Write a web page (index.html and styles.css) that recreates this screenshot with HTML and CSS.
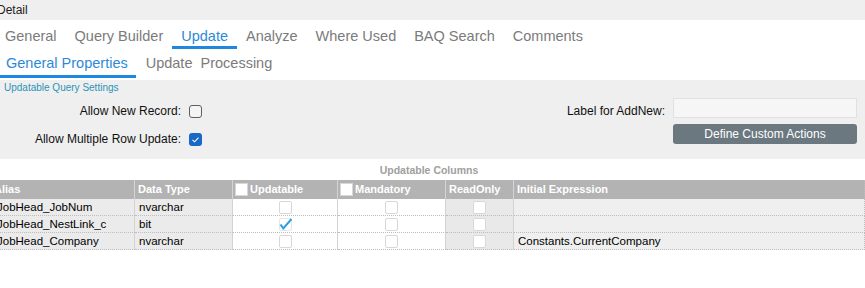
FILE: index.html
```html
<!DOCTYPE html>
<html lang="en">
<head>
    <meta charset="UTF-8">
    <title>Update - Detail</title>
    <link rel="stylesheet" href="styles.css">
</head>
<body>
    <div class="topbar">Detail</div>

    <nav class="tabs">
        <span class="tab">General</span>
        <span class="tab">Query Builder</span>
        <span class="tab active">Update</span>
        <span class="tab">Analyze</span>
        <span class="tab">Where Used</span>
        <span class="tab">BAQ Search</span>
        <span class="tab">Comments</span>
    </nav>

    <nav class="subtabs">
        <span class="subtab active">General Properties</span>
        <span class="subtab">Update  Processing</span>
    </nav>

    <section class="settings">
        <div class="settings-title">Updatable Query Settings</div>
        <div class="settings-grid">
            <label class="lbl" for="allowNew">Allow New Record:</label>
            <span class="check" id="allowNew"></span>
            <span></span>
            <label class="lbl" for="addNewLabel">Label for AddNew:</label>
            <input type="text" class="field" id="addNewLabel">

            <label class="lbl" for="allowMulti">Allow Multiple Row Update:</label>
            <span class="check checked" id="allowMulti">
                <svg width="13" height="13" viewBox="0 0 13 13"><polyline points="3.5,6.8 5.6,8.8 9.5,4.6" fill="none" stroke="#fff" stroke-width="1.1"/></svg>
            </span>
            <span></span>
            <span></span>
            <button type="button" class="action-btn">Define Custom Actions</button>
        </div>
    </section>

    <div class="columns-panel">
        <div class="caption">Updatable Columns</div>
        <div class="grid">
            <div class="head first">Alias</div>
            <div class="head">Data Type</div>
            <div class="head"><span class="hbox"></span>Updatable</div>
            <div class="head"><span class="hbox"></span>Mandatory</div>
            <div class="head">ReadOnly</div>
            <div class="head last">Initial Expression</div>

            <div class="c-grey">JobHead_JobNum</div>
            <div class="c-grey">nvarchar</div>
            <div class="c-check"><span class="box"></span></div>
            <div class="c-check"><span class="box"></span></div>
            <div class="c-check c-ro"><span class="box"></span></div>
            <div class="c-expr last"></div>

            <div class="c-grey">JobHead_NestLink_c</div>
            <div class="c-grey">bit</div>
            <div class="c-check"><span class="box on"><svg width="13" height="13" viewBox="0 0 13 13"><polyline points="1.5,6.5 4.3,10.3 12.5,1" fill="none" stroke="#27a0e6" stroke-width="2"/></svg></span></div>
            <div class="c-check"><span class="box"></span></div>
            <div class="c-check c-ro"><span class="box"></span></div>
            <div class="c-expr last"></div>

            <div class="c-grey">JobHead_Company</div>
            <div class="c-grey">nvarchar</div>
            <div class="c-check"><span class="box"></span></div>
            <div class="c-check"><span class="box"></span></div>
            <div class="c-check c-ro"><span class="box"></span></div>
            <div class="c-expr last">Constants.CurrentCompany</div>
        </div>
    </div>
</body>
</html>
```

FILE: styles.css
```css
body {
    margin: 0;
    width: 865px;
    overflow: hidden;
    font-family: "Liberation Sans", Arial, sans-serif;
    background-color: #fff;
    color: #000;
}

.topbar {
    height: 20px;
    line-height: 20px;
    font-size: 12px;
    text-indent: -3px;
    color: #222;
    background-color: #efefef;
}

/* main tab strip */
.tabs {
    display: flex;
    margin-left: -4px;
}

.tab {
    padding: 8px 9px 1px;
    line-height: 17px;
    font-size: 14.5px;
    color: #7b7b7b;
    border-bottom: 3px solid transparent;
}

.tab.active {
    color: #2b8ad6;
    border-bottom-color: #1d88dd;
}

.subtabs {
    display: flex;
    gap: 4px;
    margin-bottom: 2px;
}

.subtab {
    padding: 6px 8px 3px 6px;
    line-height: 17px;
    font-size: 14.5px;
    color: #7b7b7b;
    white-space: pre;
    border-bottom: 3px solid transparent;
}

.subtab.active {
    color: #2b8ad6;
    border-bottom-color: #1d88dd;
}

/* settings panel */
.settings {
    background-color: #efefef;
    padding: 2px 8px 5px 4px;
}

.settings-title {
    font-size: 10px;
    line-height: 12px;
    color: #2a93b8;
    margin-bottom: 4px;
}

.settings-grid {
    display: grid;
    grid-template-columns: 177px 13px 1fr auto 184px;
    grid-template-rows: 26px 30px;
    column-gap: 8px;
    align-items: center;
    font-size: 12px;
    color: #111;
}

.lbl {
    text-align: right;
    white-space: nowrap;
}

.check {
    width: 13px;
    height: 13px;
    box-sizing: border-box;
    border: 1px solid #5f5f5f;
    border-radius: 3px;
    background-color: #f4f4f4;
}

.check.checked {
    border: none;
    background-color: #1a68c6;
}

.check svg {
    display: block;
}

.field {
    align-self: start;
    height: 20px;
    box-sizing: border-box;
    margin: 0;
    border: 1px solid #e1e1e1;
    background-color: #f6f6f6;
}

.action-btn {
    align-self: start;
    height: 20px;
    margin: 0;
    border: none;
    border-radius: 3px;
    background-color: #6b7880;
    color: #fff;
    font-family: "Liberation Sans", Arial, sans-serif;
    font-size: 12px;
}

/* updatable columns grid */
.columns-panel {
    margin-left: -7px;
    width: 872px;
}

.caption {
    text-align: center;
    font-size: 10.5px;
    font-weight: bold;
    color: #a0a0a0;
    padding-top: 1px;
    line-height: 20px;
}

.grid {
    display: grid;
    grid-template-columns: 142px 98px 105px 108px 68px 1fr;
    font-size: 11.5px;
}

.grid > div {
    box-sizing: border-box;
    height: 17px;
    line-height: 16px;
    padding: 0 4px;
    white-space: nowrap;
    overflow: hidden;
    border-right: 1px solid #d3d3d3;
    border-bottom: 1px dotted #bdbdbd;
}

.grid > .head {
    display: flex;
    align-items: center;
    height: 19px;
    line-height: 19px;
    padding: 0 3px;
    background-color: #b3b3b3;
    color: #fff;
    font-size: 11px;
    font-weight: bold;
    border-bottom: none;
    border-right-color: #d4d4d4;
}

.grid > .head.first {
    padding-left: 1px;
}

.grid > .last {
    border-right: 1px dotted #bdbdbd;
}

.hbox {
    width: 13px;
    height: 13px;
    box-sizing: border-box;
    margin: 0 2px 0 -1px;
    border: 1px solid #d8d8d8;
    background-color: #fff;
}

.c-grey {
    background-color: #ebebeb;
}

.grid > .c-check {
    display: flex;
    justify-content: center;
    align-items: center;
}

.c-ro {
    background-color: #e9e9e9;
}

.c-expr {
    background-color: #efefef;
}

.box {
    position: relative;
    width: 13px;
    height: 13px;
    box-sizing: border-box;
    border: 1px solid #d8d8d8;
    border-radius: 2px;
    background-color: #fff;
}

.box.on {
    border-color: #e6e6e6;
}

.box svg {
    position: absolute;
    left: -1px;
    top: -1px;
}
```
